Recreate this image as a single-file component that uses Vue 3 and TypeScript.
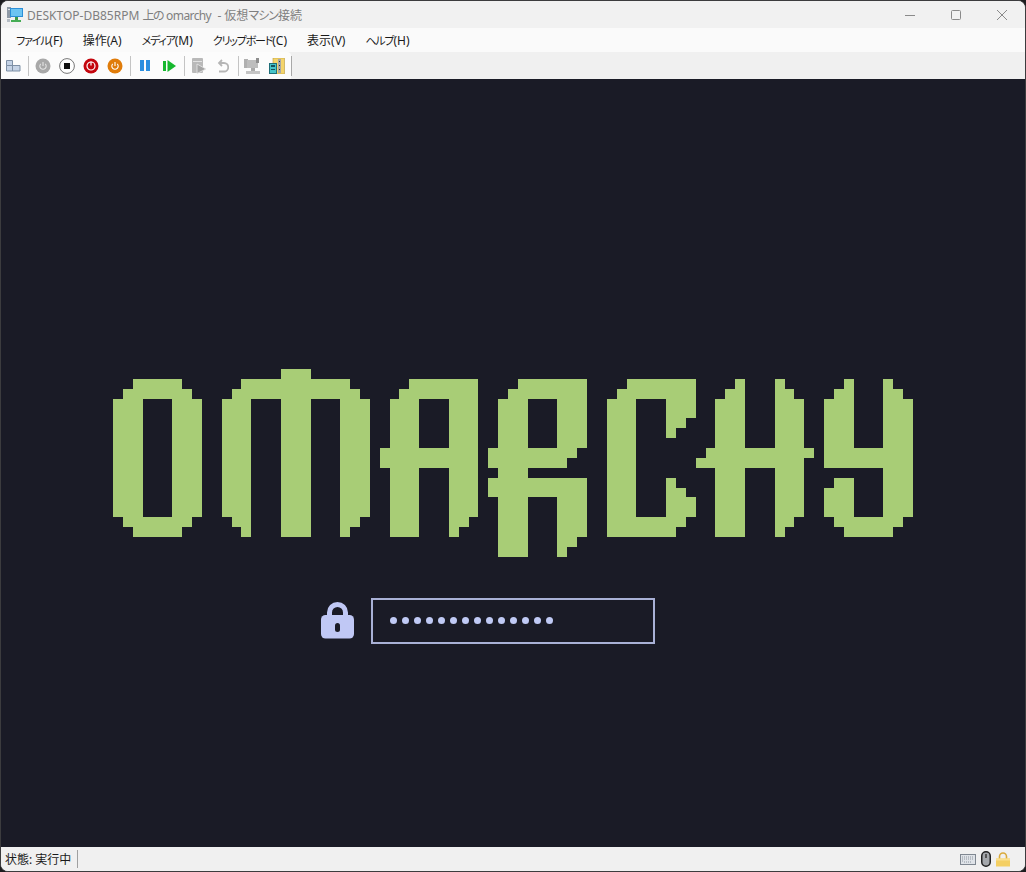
<template>
  <div class="window">
    <header class="titlebar">
      <svg class="app-icon" width="16" height="16" viewBox="0 0 16 16">
        <rect x="0" y="0" width="4" height="11" fill="#8f9aa6" />
        <rect x="1" y="2" width="2" height="1" fill="#dfe5ea" />
        <rect x="3" y="1" width="13" height="9" fill="#2b8fd8" />
        <rect x="4" y="2" width="11" height="7" fill="#6cc4f2" />
        <rect x="8" y="10" width="3" height="3" fill="#3f9a4a" />
        <rect x="4" y="13" width="10" height="2" fill="#46ad55" />
        <rect x="0" y="12" width="3" height="3" fill="#b4bcc4" />
      </svg>
      <span class="title">DESKTOP-DB85RPM <span class="no">上の</span> <span class="vm">omarchy</span> &nbsp;- 仮想<span class="kana-title">マシン</span>接続</span>
      <div class="caption">
        <svg width="10" height="10" viewBox="0 0 10 10"><path d="M0 5.5h10" stroke="#8a8a8a" fill="none" /></svg>
        <svg width="10" height="10" viewBox="0 0 10 10"><rect x=".5" y=".5" width="9" height="9" rx="1" stroke="#8a8a8a" fill="none" /></svg>
        <svg width="10" height="10" viewBox="0 0 10 10"><path d="M0 0l10 10M10 0L0 10" stroke="#8a8a8a" fill="none" /></svg>
      </div>
    </header>

    <nav class="menubar">
      <span v-for="m in menus" :key="m.key" class="menu-item">
        <span :class="{ kana: m.kana }">{{ m.label }}</span>{{ m.key }}
      </span>
    </nav>

    <div class="toolbar">
      <div class="tools">
        <span class="btn">
          <svg width="16" height="12" viewBox="0 0 16 12">
            <path d="M1.5 .5h6v5h-6zM1.5 5.5h6v5.5h-6zM7.5 5.5h7.5v5.5H7.5z" fill="#c5d3e6" stroke="#7d8fa5" />
          </svg>
        </span>
        <i class="sep" />
        <span class="btn">
          <svg width="16" height="16" viewBox="0 0 16 16">
            <circle cx="8" cy="8" r="7.5" fill="#a8a8a8" />
            <path d="M5.8 5.8a3.2 3.2 0 1 0 4.4 0M8 4v4" fill="none" stroke="#e4e4e4" stroke-width="1.1" />
          </svg>
        </span>
        <span class="btn">
          <svg width="16" height="16" viewBox="0 0 16 16">
            <circle cx="8" cy="8" r="7.4" fill="#fff" stroke="#777" />
            <rect x="5" y="5" width="6" height="6" fill="#111" />
          </svg>
        </span>
        <span class="btn">
          <svg width="16" height="16" viewBox="0 0 16 16">
            <circle cx="8" cy="8" r="7.5" fill="#c4060e" />
            <circle cx="8" cy="8" r="4" fill="none" stroke="#fff" stroke-width="1.2" />
            <path d="M8 3.5v4" stroke="#fff" stroke-width="1.2" />
          </svg>
        </span>
        <span class="btn">
          <svg width="16" height="16" viewBox="0 0 16 16">
            <circle cx="8" cy="8" r="7.5" fill="#e07c0a" />
            <path d="M5.8 5.8a3.2 3.2 0 1 0 4.4 0M8 4v4" fill="none" stroke="#fff" stroke-width="1.1" />
          </svg>
        </span>
        <i class="sep" />
        <span class="btn">
          <svg width="10" height="11" viewBox="0 0 10 11">
            <rect x="0" y="0" width="4" height="11" fill="#2b8fe0" />
            <rect x="6" y="0" width="4" height="11" fill="#2b8fe0" />
          </svg>
        </span>
        <span class="btn">
          <svg width="13" height="12" viewBox="0 0 13 12">
            <rect x="0" y="1" width="3" height="10" fill="#16b82e" />
            <path d="M4.5 0l8.5 6-8.5 6z" fill="#16b82e" />
          </svg>
        </span>
        <i class="sep" />
        <span class="btn">
          <svg width="16" height="16" viewBox="0 0 16 16">
            <rect x="1" y="0" width="11" height="15" rx="1" fill="#b9b9b9" />
            <rect x="2" y="3" width="9" height="1" fill="#e2e2e2" />
            <path d="M6 6l9 5-9 4.5z" fill="#a5a5a5" stroke="#e8e8e8" stroke-width=".8" />
          </svg>
        </span>
        <span class="btn">
          <svg width="12" height="14" viewBox="0 0 12 14">
            <path d="M5 1L2 4l3 3M2.5 4H7a3.7 3.7 0 0 1 0 8.5H2" fill="none" stroke="#b5b5b5" stroke-width="1.8" />
          </svg>
        </span>
        <i class="sep" />
        <span class="btn">
          <svg width="18" height="16" viewBox="0 0 18 16">
            <rect x="0" y="1" width="4" height="9" fill="#b0b0b0" />
            <rect x="3" y="2" width="11" height="8" fill="#bdbdbd" />
            <rect x="12" y="0" width="3" height="5" fill="#8e8e8e" />
            <rect x="7" y="10" width="4" height="3" fill="#a9a9a9" />
            <rect x="2" y="13" width="14" height="3" fill="#c4c4c4" />
          </svg>
        </span>
        <span class="btn">
          <svg width="16" height="16" viewBox="0 0 16 16">
            <rect x="4" y="0" width="11.5" height="16" fill="#f4d46a" stroke="#b79a3f" stroke-width=".6" />
            <rect x="9" y="1" width="3" height="14" fill="#a8a8a8" />
            <rect x="10" y="3" width="1" height="1" fill="#333" />
            <rect x="10" y="7" width="1" height="1" fill="#333" />
            <rect x="10" y="11" width="1" height="1" fill="#333" />
            <rect x="0.5" y="5.5" width="7" height="10" fill="#46c4c9" stroke="#1f6e78" />
            <rect x="2" y="7" width="4" height="2" fill="#15525c" />
            <rect x="2" y="11" width="4" height="1" fill="#15525c" />
          </svg>
        </span>
      </div>
      <i class="tool-end" />
    </div>

    <main class="screen">
      <svg
        class="logo"
        width="800"
        height="187.67"
        viewBox="0 0 81 19"
        shape-rendering="crispEdges"
        role="img"
        aria-label="OMARCHY"
      >
        <rect
          v-for="(c, i) in logoCells"
          :key="i"
          :x="c.x"
          :y="c.y"
          :width="c.w"
          height="1"
        />
      </svg>

      <div class="login">
        <svg class="lock" width="33" height="37" viewBox="0 0 33 37">
          <path
            d="M6 15V10.5a10.5 10.5 0 0 1 21 0V15h-5v-4.5a5.5 5.5 0 0 0-11 0V15z"
            fill="#c0c8f5"
          />
          <rect x="0" y="13" width="33" height="23.5" rx="4.5" fill="#c0c8f5" />
          <rect x="14" y="21" width="5" height="9" rx="2.5" fill="#1a1b26" />
        </svg>
        <div class="password">
          <span v-for="n in 14" :key="n" class="dot" />
        </div>
      </div>
    </main>

    <footer class="statusbar">
      <span class="state">状態: 実行中</span>
      <i class="status-sep" />
      <div class="status-icons">
        <svg width="16" height="11" viewBox="0 0 16 11">
          <rect x=".5" y=".5" width="15" height="10" fill="#dfe3e8" stroke="#7f8791" />
          <path d="M2 3h12M2 5h12M2 7h1M4 8h8" stroke="#8e96a0" stroke-dasharray="1 1" fill="none" />
        </svg>
        <svg width="10" height="16" viewBox="0 0 10 16">
          <rect x=".75" y=".75" width="8.5" height="14.5" rx="4.2" fill="#a5a8ac" stroke="#222" stroke-width="1.5" />
          <rect x="4" y="3" width="2" height="4" fill="#555" />
        </svg>
        <svg width="14" height="15" viewBox="0 0 14 15">
          <path d="M3.5 7V4.5a3.5 3.5 0 0 1 7 0V7" fill="none" stroke="#d9a93a" stroke-width="1.6" />
          <rect x="0" y="6.5" width="14" height="8" fill="#f4cf63" />
          <rect x="0" y="6.5" width="14" height="2" fill="#f9e08f" />
        </svg>
      </div>
    </footer>
  </div>
</template>

<script setup lang="ts">
type Span = [number, number];

interface Cell {
  x: number;
  y: number;
  w: number;
}

const menus = [
  { label: "ファイル", key: "(F)", kana: true },
  { label: "操作", key: "(A)", kana: false },
  { label: "メディア", key: "(M)", kana: true },
  { label: "クリップボード", key: "(C)", kana: true },
  { label: "表示", key: "(V)", kana: false },
  { label: "ヘルプ", key: "(H)", kana: true },
];

// [first row, last row, spans of columns], on the 81 x 19 pixel grid of the banner
const bands: [number, number, Span[]][] = [
  // O
  [1, 1, [[2, 7]]],
  [2, 2, [[1, 8]]],
  [3, 14, [[0, 3], [6, 9]]],
  [15, 15, [[1, 8]]],
  [16, 16, [[2, 7]]],
  // M
  [0, 0, [[17, 20]]],
  [1, 1, [[13, 24]]],
  [2, 2, [[12, 25]]],
  [3, 14, [[11, 14], [17, 20], [23, 26]]],
  [15, 15, [[12, 14], [17, 20], [23, 25]]],
  [16, 16, [[13, 14], [17, 20], [23, 24]]],
  // A
  [1, 1, [[30, 37]]],
  [2, 2, [[29, 37]]],
  [3, 7, [[28, 31], [34, 37]]],
  [8, 9, [[27, 37]]],
  [10, 14, [[28, 31], [34, 37]]],
  [15, 15, [[28, 31], [34, 36]]],
  [16, 16, [[28, 31], [34, 35]]],
  // R
  [1, 1, [[41, 48]]],
  [2, 2, [[40, 48]]],
  [3, 7, [[39, 42], [45, 48]]],
  [8, 8, [[38, 47]]],
  [9, 9, [[38, 46]]],
  [10, 10, [[39, 42]]],
  [11, 12, [[38, 48]]],
  [13, 16, [[39, 42], [45, 48]]],
  [17, 17, [[39, 42], [45, 47]]],
  [18, 18, [[39, 42], [45, 46]]],
  // C
  [1, 1, [[52, 59]]],
  [2, 2, [[51, 59]]],
  [3, 4, [[50, 53], [56, 59]]],
  [5, 5, [[50, 53], [56, 58]]],
  [6, 6, [[50, 53], [56, 57]]],
  [7, 10, [[50, 53]]],
  [11, 11, [[50, 53], [56, 57]]],
  [12, 12, [[50, 53], [56, 58]]],
  [13, 14, [[50, 53], [56, 59]]],
  [15, 15, [[50, 58]]],
  [16, 16, [[50, 57]]],
  // H
  [1, 1, [[63, 64], [67, 68]]],
  [2, 2, [[62, 64], [67, 69]]],
  [3, 7, [[61, 64], [67, 70]]],
  [8, 8, [[60, 71]]],
  [9, 9, [[59, 70]]],
  [10, 14, [[61, 64], [67, 70]]],
  [15, 15, [[61, 64], [67, 69]]],
  [16, 16, [[61, 64], [67, 68]]],
  // Y
  [1, 1, [[74, 75], [78, 79]]],
  [2, 2, [[73, 75], [78, 80]]],
  [3, 7, [[72, 75], [78, 81]]],
  [8, 9, [[72, 81]]],
  [10, 10, [[78, 81]]],
  [11, 11, [[73, 75], [78, 81]]],
  [12, 14, [[72, 75], [78, 81]]],
  [15, 15, [[73, 80]]],
  [16, 16, [[74, 79]]],
];

const logoCells: Cell[] = bands.flatMap(([from, to, spans]) => {
  const cells: Cell[] = [];
  for (let y = from; y <= to; y++) {
    for (const [a, b] of spans) cells.push({ x: a, y, w: b - a });
  }
  return cells;
});
</script>

<style>
html,
body {
  margin: 0;
  background: #1d1d1f;
}
</style>

<style scoped>
.window {
  width: 1026px;
  height: 872px;
  display: flex;
  flex-direction: column;
  overflow: hidden;
  box-sizing: border-box;
  border: 1px solid #3c3c3e;
  border-radius: 8px;
  font-family: "Noto Sans", "Noto Sans CJK JP", sans-serif;
  font-size: 12px;
  font-feature-settings: "palt";
  background: #f0f0f0;
}

.titlebar {
  height: 27px;
  flex: none;
  display: flex;
  align-items: center;
  padding-left: 6px;
  background: #f1f1f1;
  color: #7f7f7f;
}

.app-icon {
  margin-right: 4px;
}

.title {
  white-space: pre;
}

.no {
  letter-spacing: -1.5px;
}

.vm {
  letter-spacing: -0.6px;
}

.kana-title {
  letter-spacing: -1px;
}

.caption {
  margin-left: auto;
  display: flex;
  align-items: center;
  gap: 36px;
  padding-right: 18px;
}

.menubar {
  height: 24px;
  flex: none;
  display: flex;
  align-items: center;
  gap: 20px;
  padding-left: 15px;
  background: #fafafa;
  color: #1a1a1a;
}

.kana {
  font-size: 11px;
  letter-spacing: -1.2px;
}

.toolbar {
  height: 27px;
  flex: none;
  display: flex;
  background: #f0f0f0;
}

.tools {
  width: 290px;
  box-sizing: border-box;
  display: flex;
  align-items: center;
  background: #fcfcfc;
  border-top-right-radius: 4px;
}

.btn {
  width: 24px;
  height: 27px;
  flex: none;
  display: flex;
  align-items: center;
  justify-content: center;
}

.sep {
  width: 1px;
  height: 20px;
  flex: none;
  margin: 0 2px 0 3px;
  background: #c4c4c4;
}

.tool-end {
  width: 1px;
  height: 20px;
  align-self: center;
  background: #a8a8a8;
}

.screen {
  flex: 1;
  min-height: 0;
  display: flex;
  flex-direction: column;
  align-items: center;
  padding-top: 290px;
  box-sizing: border-box;
  background: #1a1b26;
}

.logo {
  display: block;
  fill: #a8cd76;
}

.login {
  margin-top: 41px;
  align-self: stretch;
  display: grid;
  grid-template-columns: 1fr 284px 1fr;
}

.lock {
  justify-self: end;
  margin: 4px 17px 0 0;
}

.password {
  height: 46px;
  box-sizing: border-box;
  border: 2px solid #a9b1d6;
  display: flex;
  align-items: center;
  gap: 5px;
  padding-left: 17px;
  background: #1a1b26;
}

.dot {
  width: 7px;
  height: 7px;
  border-radius: 50%;
  background: #c0caf5;
}

.statusbar {
  height: 24px;
  flex: none;
  display: flex;
  align-items: center;
  padding-left: 4px;
  background: #f0f0f0;
  color: #1a1a1a;
}

.status-sep {
  width: 1px;
  height: 18px;
  margin-left: 6px;
  background: #a0a0a0;
}

.status-icons {
  margin-left: auto;
  display: flex;
  align-items: center;
  gap: 5px;
  padding-right: 15px;
}
</style>
